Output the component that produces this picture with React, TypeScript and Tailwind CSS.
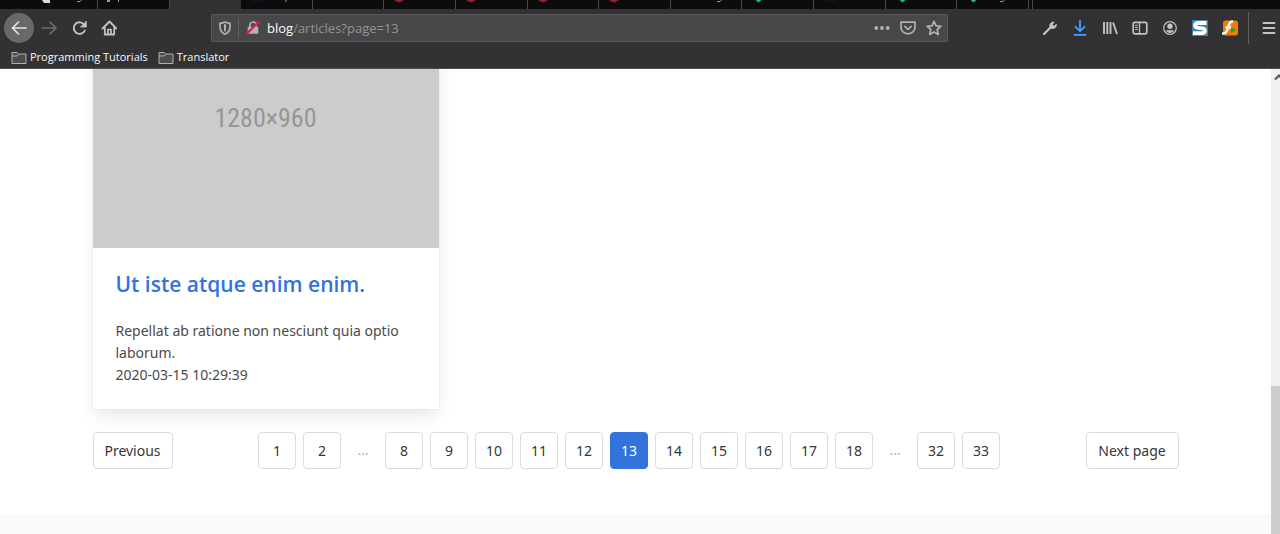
import type { ReactNode } from "react";
import clsx from "clsx";

type Tab = {
  title: string;
  active?: boolean;
  art?: ReactNode;
};

const redIcon = <path d="M10 0h10l-2.500 1.500-2.500 1-2.500-1z" fill="#8f2429" />;
const tealIcon = <path d="M13.500 0h6l-3 2.500z" fill="#1fb897" />;
const navyIcon = <path d="M10 0h14l-4 2h-6z" fill="#10102c" />;
const descender = (x: number) => (
  <path d={`M${x} 1.500h3l1.500-1.500`} stroke="#9a9a9a" fill="none" />
);

const tabs: Tab[] = [
  {
    title: "Tab 1",
    art: (
      <>
        <path d="M42 0h8v3h-6z" fill="#d8dce6" />
        {descender(77)}
      </>
    ),
  },
  {
    title: "Tab 2",
    art: <path d="M9 0h3v2h-3zM20 0h1v2h-1z" fill="#7fa6c4" />,
  },
  { title: "Articles", active: true },
  {
    title: "Tab 4",
    art: (
      <>
        {navyIcon}
        <path d="M45 0v2" stroke="#9a9a9a" />
      </>
    ),
  },
  { title: "Tab 5" },
  { title: "Tab 6", art: redIcon },
  { title: "Tab 7", art: redIcon },
  { title: "Tab 8", art: redIcon },
  { title: "Tab 9", art: redIcon },
  { title: "Tab 10", art: descender(46) },
  { title: "Tab 11", art: tealIcon },
  { title: "Tab 12", art: navyIcon },
  { title: "Tab 13", art: tealIcon },
  {
    title: "Tab 14",
    art: (
      <>
        {tealIcon}
        {descender(43)}
      </>
    ),
  },
];

const CURRENT_PAGE = 13;
const pages = [1, 2, null, 8, 9, 10, 11, 12, 13, 14, 15, 16, 17, 18, null, 32, 33];

type IconProps = {
  children: ReactNode;
  className?: string;
};

function Icon({ children, className }: IconProps) {
  return (
    <svg
      viewBox="0 0 16 16"
      className={clsx("size-4 shrink-0", className)}
      fill="none"
      stroke="currentColor"
      strokeWidth="1.7"
      strokeLinecap="round"
      strokeLinejoin="round"
      aria-hidden="true"
    >
      {children}
    </svg>
  );
}

type ToolButtonProps = {
  label: string;
  children: ReactNode;
  className?: string;
};

function ToolButton({ label, children, className }: ToolButtonProps) {
  return (
    <button
      type="button"
      aria-label={label}
      className={clsx(
        "flex h-[30px] w-[30px] shrink-0 items-center justify-center rounded-full",
        className
      )}
    >
      {children}
    </button>
  );
}

function TabStrip() {
  return (
    <div className="flex h-[9px] bg-[#0c0c0d]">
      <div className="flex w-[1029px] shrink-0">
        {tabs.map((tab, index) => (
          <button
            key={tab.title}
            type="button"
            aria-label={tab.title}
            className={clsx(
              "h-full overflow-hidden border-r",
              index === 0 ? "w-[98px] shrink-0" : "min-w-0 flex-1",
              tab.active ? "border-[#323234] bg-[#323234]" : "border-[#4a4a4c]"
            )}
          >
            <svg width="96" height="9" viewBox="0 0 96 9" aria-hidden="true">
              {tab.art}
            </svg>
          </button>
        ))}
      </div>
      <div className="w-1 border-r border-[#4a4a4c]" />
    </div>
  );
}

function AddressBar() {
  return (
    <div className="mx-[87px] flex h-7 min-w-0 flex-1 items-center rounded-xs border border-[#5a5a5c] bg-[#474749] text-[#b1b1b3]">
      <button type="button" aria-label="Tracking protection" className="px-[5px]">
        <Icon>
          <path d="M8 2c1.600.8 3.300 1.200 5 1.300V7c0 3.400-1.800 5.800-5 7.200C4.800 12.800 3 10.400 3 7V3.300C4.700 3.200 6.400 2.800 8 2z" />
          <path d="M8 5v5.500" strokeWidth="2" />
        </Icon>
      </button>
      <div className="h-5 w-px bg-[#5f5f61]" />
      <button type="button" aria-label="Connection not secure" className="px-[6px]">
        <Icon>
          <path d="M5 7.500V5a3 3 0 0 1 6 0v2.500" />
          <path d="M3.500 7.500h9v5.500h-9z" fill="currentColor" />
          <path d="M2 13.500L13.500 2" stroke="#e5154f" strokeWidth="2.200" />
        </Icon>
      </button>
      <label htmlFor="url" className="pt-0.5 text-[13px] text-[#f9f9fa]">
        blog
      </label>
      <input
        id="url"
        type="text"
        defaultValue="/articles?page=13"
        className="min-w-0 flex-1 bg-transparent pt-0.5 text-[13px] text-[#949496] outline-none"
      />
      <div className="flex items-center gap-[10px] pr-[5px]">
        <button type="button" aria-label="Page actions">
          <Icon>
            <g fill="currentColor" stroke="none">
              <circle cx="2.300" cy="8" r="1.900" />
              <circle cx="8" cy="8" r="1.900" />
              <circle cx="13.700" cy="8" r="1.900" />
            </g>
          </Icon>
        </button>
        <button type="button" aria-label="Save to Pocket">
          <Icon>
            <path d="M1 2.200h14V7.500a7 6.300 0 0 1-14 0z" />
            <path d="M4.800 6.300L8 9.400l3.200-3.100" />
          </Icon>
        </button>
        <button type="button" aria-label="Bookmark this page">
          <Icon>
            <path d="M8 1.300l2 4.500 4.900.5-3.700 3.200 1.100 4.900L8 11.900l-4.300 2.500 1.100-4.900L1.100 6.300 6 5.800z" />
          </Icon>
        </button>
      </div>
    </div>
  );
}

function Toolbar() {
  return (
    <div className="flex h-[38px] items-center pl-1 text-[#c3c3c5]">
      <ToolButton label="Back" className="bg-[#69696b] text-[#e6e6e7]">
        <Icon>
          <path d="M15 8H1.500M7.500 2L1.500 8l6 6" />
        </Icon>
      </ToolButton>
      <ToolButton label="Forward" className="text-[#6d6d6f]">
        <Icon>
          <path d="M1.500 8h13.500M9 2l6 6-6 6" />
        </Icon>
      </ToolButton>
      <ToolButton label="Reload">
        <Icon>
          <path d="M13.800 10.600a5.800 5.800 0 1 1-.3-5.600" strokeWidth="1.900" />
          <path d="M15.300 1.500v5.500H9.800z" fill="currentColor" strokeWidth="0.800" />
        </Icon>
      </ToolButton>
      <ToolButton label="Home">
        <Icon>
          <path d="M1.500 8.500L8.500 1.500l7 7M3.800 7.500v7h9.400v-7" strokeWidth="1.800" />
          <path d="M7 14V9.500h3V14" />
        </Icon>
      </ToolButton>

      <AddressBar />

      <ToolButton label="Developer tools">
        <Icon>
          <path d="M2 14l6-6" strokeWidth="2.200" />
          <path
            d="M14.300 4.500L12 6.300 10.300 4.600 12.100 2.200C10 1.600 7.800 3.300 7.800 5.600L8 8l2.400.5c2.400.1 4.500-1.700 3.900-4z"
            fill="currentColor"
            strokeWidth="0.800"
          />
        </Icon>
      </ToolButton>
      <ToolButton label="Downloads" className="text-[#45a1ff]">
        <Icon>
          <path d="M8 1v10M3.500 6.800L8 11.200l4.500-4.400M2.500 14.800h11" strokeWidth="1.800" />
        </Icon>
      </ToolButton>
      <ToolButton label="Library">
        <Icon>
          <path
            d="M2 2v12M5.300 2v12M8.500 2v12M11 2.500l4 11.500"
            strokeLinecap="butt"
            strokeWidth="1.900"
          />
        </Icon>
      </ToolButton>
      <ToolButton label="Sidebars">
        <Icon>
          <rect x="1.200" y="2.300" width="13.600" height="11.500" rx="1.700" />
          <path d="M7.500 2.500v11" strokeWidth="1.300" />
          <path d="M3.500 5.300h2M3.500 7.500h2M3.500 9.700h2" strokeWidth="1" />
        </Icon>
      </ToolButton>
      <ToolButton label="Account">
        <Icon>
          <circle cx="8" cy="8" r="6.300" strokeWidth="1.200" />
          <circle cx="8" cy="6.300" r="2.700" fill="currentColor" stroke="none" />
          <path d="M3.800 10.200h8.400c-1 2-2.500 2.700-4.200 2.700s-3.200-.7-4.200-2.700z" fill="currentColor" stroke="none" />
        </Icon>
      </ToolButton>
      <ToolButton label="Stylish">
        <Icon>
          <path d="M0 0h16v16H0z" fill="#3f7fa8" stroke="none" />
          <path
            d="M14.500 3H6C2 3 2 7.600 6 7.900l4.500.4c3.400.4 3.200 4.900-.5 4.900H1"
            stroke="#fff"
            strokeWidth="3.800"
            strokeLinecap="butt"
          />
        </Icon>
      </ToolButton>
      <ToolButton label="Flash player">
        <Icon>
          <rect x="1" y="0.500" width="15" height="15" rx="2.500" fill="#f07d0a" stroke="none" />
          <path d="M10 1.500C7.500 1.500 7 4.500 6 8s-2 5.500-5 5.500M4.500 7.500h4" stroke="#fff" strokeWidth="2.600" />
          <path d="M9 7l5 3-5 3z" fill="#2c9a35" stroke="none" />
        </Icon>
      </ToolButton>
      <div className="mr-2 ml-[3px] h-8 w-px shrink-0 bg-[#5f5f61]" />
      <button type="button" aria-label="Open menu" className="flex w-[23px] shrink-0 justify-center">
        <Icon>
          <path d="M2.500 3h11M2.500 8h11M2.500 13h11" strokeWidth="1.900" />
        </Icon>
      </button>
    </div>
  );
}

function Bookmark({ name }: { name: string }) {
  return (
    <a href="#" className="flex items-center gap-[3px] text-[11px] text-[#f9f9fa]">
      <svg
        viewBox="0 0 16 14"
        className="h-[14px] w-4"
        fill="#4c4c4e"
        stroke="#b1b1b3"
        strokeLinejoin="round"
        aria-hidden="true"
      >
        <path d="M1 12.500v-11h5l1.500 1.500H15v9.500z" />
        <path d="M1 5h5l1.500-1.500" fill="none" />
      </svg>
      {name}
    </a>
  );
}

function ArticleCard() {
  return (
    <article className="bg-white shadow-[0_8px_16px_-2px_rgba(10,10,10,0.1),0_0_0_1px_rgba(10,10,10,0.02)]">
      <div className="flex aspect-[4/3] items-center justify-center bg-[#ccc] pt-0.5 font-['Roboto_Condensed','Liberation_Sans_Narrow','Liberation_Sans',sans-serif] text-[26px] text-[#969696]">
        1280×960
      </div>
      <div className="px-[23px] py-[23px]">
        <h2 className="mb-[22px] text-[21px] leading-[27px] font-semibold text-[#3273dc]">
          <a href="#">Ut iste atque enim enim.</a>
        </h2>
        <p className="font-['Noto_Sans',sans-serif] text-sm leading-[22px] text-[#4a4a4a]">
          Repellat ab ratione non nesciunt quia optio laborum.
          <br />
          <time dateTime="2020-03-15T10:29:39">2020-03-15 10:29:39</time>
        </p>
      </div>
    </article>
  );
}

const pageLinkClass =
  "flex h-[37px] shrink-0 items-center justify-center rounded-sm border pt-0.5";

function Pagination() {
  return (
    <nav
      aria-label="pagination"
      className="mt-[23px] flex items-center justify-between font-['Noto_Sans',sans-serif] text-sm text-[#363636]"
    >
      <a href="#" className={clsx(pageLinkClass, "w-20 border-[#dbdbdb]")}>
        Previous
      </a>
      <ul className="flex items-center gap-[7px]">
        {pages.map((page, index) =>
          page === null ? (
            <li key={`gap-${index}`} className="w-[30px] text-center text-[#b5b5b5]">
              …
            </li>
          ) : (
            <li key={page}>
              <a
                href={`#page-${page}`}
                aria-current={page === CURRENT_PAGE ? "page" : undefined}
                className={clsx(
                  pageLinkClass,
                  "w-[38px]",
                  page === CURRENT_PAGE
                    ? "border-[#3273dc] bg-[#3273dc] text-white"
                    : "border-[#dbdbdb]"
                )}
              >
                {page}
              </a>
            </li>
          )
        )}
      </ul>
      <a href="#" className={clsx(pageLinkClass, "w-[93px] border-[#dbdbdb]")}>
        Next page
      </a>
    </nav>
  );
}

function Scrollbar() {
  return (
    <div className="flex w-[9px] shrink-0 flex-col overflow-hidden bg-[#f0f0f0]">
      <div className="h-[317px]">
        <svg width="16" height="16" viewBox="0 0 16 16" fill="none" stroke="#505050" strokeWidth="2" aria-hidden="true">
          <path d="M4 10.500l4-4 4 4" />
        </svg>
      </div>
      <div className="flex-1 bg-[#cdcdcd]" />
    </div>
  );
}

function App() {
  return (
    <div className="flex min-h-screen flex-col bg-white font-['Open_Sans',sans-serif]">
      <header className="border-b border-[#4f4f51] bg-[#323234]">
        <TabStrip />
        <Toolbar />
        <div className="flex h-[21px] items-center gap-[10px] px-[11px]">
          <Bookmark name="Programming Tutorials" />
          <Bookmark name="Translator" />
        </div>
      </header>
      <div className="flex flex-1">
        <div className="flex min-w-0 flex-1 flex-col overflow-hidden">
          <main className="mx-auto w-full max-w-[1086px] pb-[45px]">
            <div className="-mt-[81px] grid grid-cols-3 gap-6">
              <ArticleCard />
            </div>
            <Pagination />
          </main>
          <footer className="flex-1 bg-[#fafafa]" />
        </div>
        <Scrollbar />
      </div>
    </div>
  );
}

export default App;
